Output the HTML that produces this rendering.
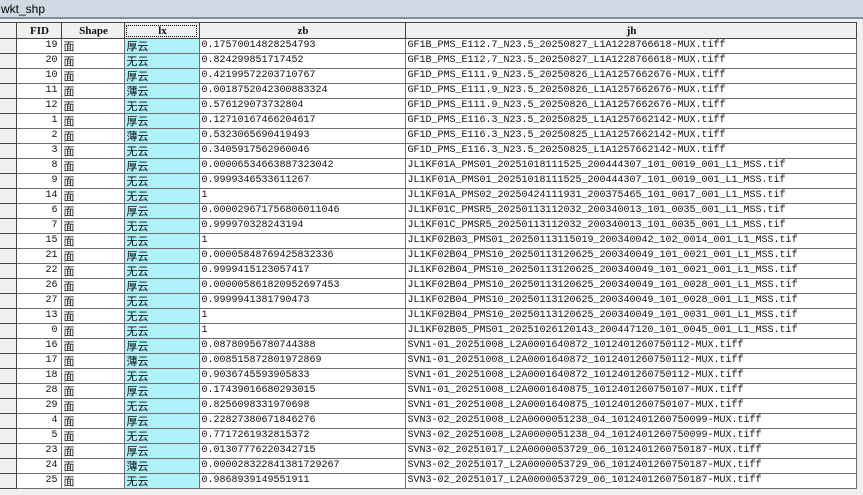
<!DOCTYPE html>
<html><head><meta charset="utf-8"><style>
body{margin:0;width:863px;height:495px;overflow:hidden;background:#f0f0f0;font-family:"Liberation Mono","Noto Sans CJK SC",monospace;font-size:10px;}
.title{position:absolute;left:0;top:0;width:863px;height:19px;background:#cfd9e3;font-family:"Liberation Sans",sans-serif;font-size:12px;line-height:18px;padding-left:1px;color:#000;border-bottom:2px solid #8a8f96;box-sizing:border-box}
table{position:absolute;left:0;top:22px;border-collapse:collapse;table-layout:fixed}
td,th{height:14px;padding:0 0 0 2px;border:1px solid #6f6f6f;white-space:nowrap;overflow:hidden;line-height:14px;background:#fff;color:#111}
th{height:15px;background:#f0f0f0;font-weight:bold;text-align:center;border-color:#444;font-family:"Liberation Serif",serif;font-size:11px}
td.s{background:#f0f0f0;border-left:none;border-color:#444}
td.f{text-align:right;padding-right:3px}
td.l{background:#aef1f8}
th.lx{outline:1px dotted #000;outline-offset:-3px}
.c{font-family:"Noto Sans CJK SC","Liberation Mono",sans-serif;font-size:11px}
</style></head><body>
<div class="title">wkt_shp</div>
<table>
<colgroup><col style="width:16px"><col style="width:45px"><col style="width:63px"><col style="width:75px"><col style="width:206px"><col style="width:451px"></colgroup>
<tr><th style="border-left:none"></th><th>FID</th><th>Shape</th><th class="lx">lx</th><th>zb</th><th>jh</th></tr>
<tr><td class="s"></td><td class="f">19</td><td class="c">面</td><td class="l c">厚云</td><td>0.17570014828254793</td><td>GF1B_PMS_E112.7_N23.5_20250827_L1A1228766618-MUX.tiff</td></tr>
<tr><td class="s"></td><td class="f">20</td><td class="c">面</td><td class="l c">无云</td><td>0.824299851717452</td><td>GF1B_PMS_E112.7_N23.5_20250827_L1A1228766618-MUX.tiff</td></tr>
<tr><td class="s"></td><td class="f">10</td><td class="c">面</td><td class="l c">厚云</td><td>0.42199572203710767</td><td>GF1D_PMS_E111.9_N23.5_20250826_L1A1257662676-MUX.tiff</td></tr>
<tr><td class="s"></td><td class="f">11</td><td class="c">面</td><td class="l c">薄云</td><td>0.0018752042300883324</td><td>GF1D_PMS_E111.9_N23.5_20250826_L1A1257662676-MUX.tiff</td></tr>
<tr><td class="s"></td><td class="f">12</td><td class="c">面</td><td class="l c">无云</td><td>0.576129073732804</td><td>GF1D_PMS_E111.9_N23.5_20250826_L1A1257662676-MUX.tiff</td></tr>
<tr><td class="s"></td><td class="f">1</td><td class="c">面</td><td class="l c">厚云</td><td>0.12710167466204617</td><td>GF1D_PMS_E116.3_N23.5_20250825_L1A1257662142-MUX.tiff</td></tr>
<tr><td class="s"></td><td class="f">2</td><td class="c">面</td><td class="l c">薄云</td><td>0.5323065690419493</td><td>GF1D_PMS_E116.3_N23.5_20250825_L1A1257662142-MUX.tiff</td></tr>
<tr><td class="s"></td><td class="f">3</td><td class="c">面</td><td class="l c">无云</td><td>0.3405917562960046</td><td>GF1D_PMS_E116.3_N23.5_20250825_L1A1257662142-MUX.tiff</td></tr>
<tr><td class="s"></td><td class="f">8</td><td class="c">面</td><td class="l c">厚云</td><td>0.00006534663887323042</td><td>JL1KF01A_PMS01_20251018111525_200444307_101_0019_001_L1_MSS.tif</td></tr>
<tr><td class="s"></td><td class="f">9</td><td class="c">面</td><td class="l c">无云</td><td>0.9999346533611267</td><td>JL1KF01A_PMS01_20251018111525_200444307_101_0019_001_L1_MSS.tif</td></tr>
<tr><td class="s"></td><td class="f">14</td><td class="c">面</td><td class="l c">无云</td><td>1</td><td>JL1KF01A_PMS02_20250424111931_200375465_101_0017_001_L1_MSS.tif</td></tr>
<tr><td class="s"></td><td class="f">6</td><td class="c">面</td><td class="l c">厚云</td><td>0.000029671756806011046</td><td>JL1KF01C_PMSR5_20250113112032_200340013_101_0035_001_L1_MSS.tif</td></tr>
<tr><td class="s"></td><td class="f">7</td><td class="c">面</td><td class="l c">无云</td><td>0.999970328243194</td><td>JL1KF01C_PMSR5_20250113112032_200340013_101_0035_001_L1_MSS.tif</td></tr>
<tr><td class="s"></td><td class="f">15</td><td class="c">面</td><td class="l c">无云</td><td>1</td><td>JL1KF02B03_PMS01_20250113115019_200340042_102_0014_001_L1_MSS.tif</td></tr>
<tr><td class="s"></td><td class="f">21</td><td class="c">面</td><td class="l c">厚云</td><td>0.00005848769425832336</td><td>JL1KF02B04_PMS10_20250113120625_200340049_101_0021_001_L1_MSS.tif</td></tr>
<tr><td class="s"></td><td class="f">22</td><td class="c">面</td><td class="l c">无云</td><td>0.9999415123057417</td><td>JL1KF02B04_PMS10_20250113120625_200340049_101_0021_001_L1_MSS.tif</td></tr>
<tr><td class="s"></td><td class="f">26</td><td class="c">面</td><td class="l c">厚云</td><td>0.000005861820952697453</td><td>JL1KF02B04_PMS10_20250113120625_200340049_101_0028_001_L1_MSS.tif</td></tr>
<tr><td class="s"></td><td class="f">27</td><td class="c">面</td><td class="l c">无云</td><td>0.9999941381790473</td><td>JL1KF02B04_PMS10_20250113120625_200340049_101_0028_001_L1_MSS.tif</td></tr>
<tr><td class="s"></td><td class="f">13</td><td class="c">面</td><td class="l c">无云</td><td>1</td><td>JL1KF02B04_PMS10_20250113120625_200340049_101_0031_001_L1_MSS.tif</td></tr>
<tr><td class="s"></td><td class="f">0</td><td class="c">面</td><td class="l c">无云</td><td>1</td><td>JL1KF02B05_PMS01_20251026120143_200447120_101_0045_001_L1_MSS.tif</td></tr>
<tr><td class="s"></td><td class="f">16</td><td class="c">面</td><td class="l c">厚云</td><td>0.08780956780744388</td><td>SVN1-01_20251008_L2A0001640872_1012401260750112-MUX.tiff</td></tr>
<tr><td class="s"></td><td class="f">17</td><td class="c">面</td><td class="l c">薄云</td><td>0.008515872801972869</td><td>SVN1-01_20251008_L2A0001640872_1012401260750112-MUX.tiff</td></tr>
<tr><td class="s"></td><td class="f">18</td><td class="c">面</td><td class="l c">无云</td><td>0.9036745593905833</td><td>SVN1-01_20251008_L2A0001640872_1012401260750112-MUX.tiff</td></tr>
<tr><td class="s"></td><td class="f">28</td><td class="c">面</td><td class="l c">厚云</td><td>0.17439016680293015</td><td>SVN1-01_20251008_L2A0001640875_1012401260750107-MUX.tiff</td></tr>
<tr><td class="s"></td><td class="f">29</td><td class="c">面</td><td class="l c">无云</td><td>0.8256098331970698</td><td>SVN1-01_20251008_L2A0001640875_1012401260750107-MUX.tiff</td></tr>
<tr><td class="s"></td><td class="f">4</td><td class="c">面</td><td class="l c">厚云</td><td>0.22827380671846276</td><td>SVN3-02_20251008_L2A0000051238_04_1012401260750099-MUX.tiff</td></tr>
<tr><td class="s"></td><td class="f">5</td><td class="c">面</td><td class="l c">无云</td><td>0.7717261932815372</td><td>SVN3-02_20251008_L2A0000051238_04_1012401260750099-MUX.tiff</td></tr>
<tr><td class="s"></td><td class="f">23</td><td class="c">面</td><td class="l c">厚云</td><td>0.01307776220342715</td><td>SVN3-02_20251017_L2A0000053729_06_1012401260750187-MUX.tiff</td></tr>
<tr><td class="s"></td><td class="f">24</td><td class="c">面</td><td class="l c">薄云</td><td>0.000028322841381729267</td><td>SVN3-02_20251017_L2A0000053729_06_1012401260750187-MUX.tiff</td></tr>
<tr><td class="s"></td><td class="f">25</td><td class="c">面</td><td class="l c">无云</td><td>0.9868939149551911</td><td>SVN3-02_20251017_L2A0000053729_06_1012401260750187-MUX.tiff</td></tr>
</table>
</body></html>
